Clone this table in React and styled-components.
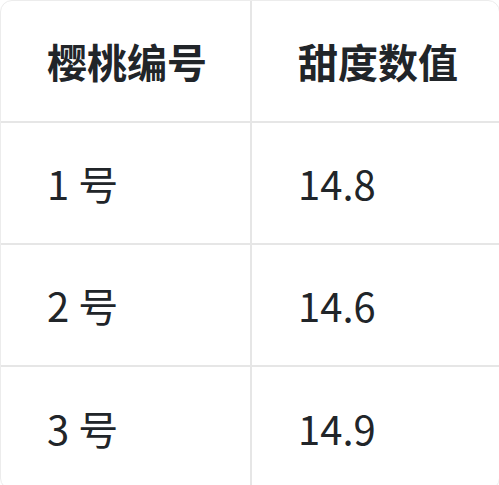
import React from "react";
import styled, { createGlobalStyle, css } from "styled-components";

const Global = createGlobalStyle`
  html, body { margin: 0; padding: 0; background: #ffffff; }
  body { font-family: "Noto Sans CJK SC", "Noto Sans", sans-serif; color: #212529; }
`;

const Table = styled.table`
  width: 500px;
  border-collapse: separate;
  border-spacing: 0;
  border: 1px solid #ececec;
  border-radius: 12px;
  overflow: hidden;
  table-layout: fixed;
`;

const Col = styled.col`
  width: ${(p) => (p.$w ? `${p.$w}px` : "auto")};
`;

const cellBase = css`
  height: 122px;
  padding: 0 0 0 46px;
  box-sizing: border-box;
  font-size: 40px;
  line-height: 1.4;
  color: #212529;
  text-align: left;
  vertical-align: middle;
  white-space: nowrap;
  border-bottom: ${(p) => (p.$last ? "none" : "2px solid #e6e6e6")};
  border-right: ${(p) => (p.$first ? "2px solid #e6e6e6" : "none")};
`;

const HeadCell = styled.th`
  ${cellBase};
  font-weight: 700;
`;

const Cell = styled.td`
  ${cellBase};
  font-weight: 400;
`;

const rows = [
  ["1 号", "14.8"],
  ["2 号", "14.6"],
  ["3 号", "14.9"],
];

export default function App() {
  return (
    <>
      <Global />
      <Table>
        <colgroup>
          <Col $w={251} />
          <Col />
        </colgroup>
        <thead>
          <tr>
            <HeadCell $first>樱桃编号</HeadCell>
            <HeadCell>甜度数值</HeadCell>
          </tr>
        </thead>
        <tbody>
          {rows.map((r, i) => (
            <tr key={i}>
              <Cell $first $last={i === rows.length - 1}>
                {r[0]}
              </Cell>
              <Cell $last={i === rows.length - 1}>{r[1]}</Cell>
            </tr>
          ))}
        </tbody>
      </Table>
    </>
  );
}
